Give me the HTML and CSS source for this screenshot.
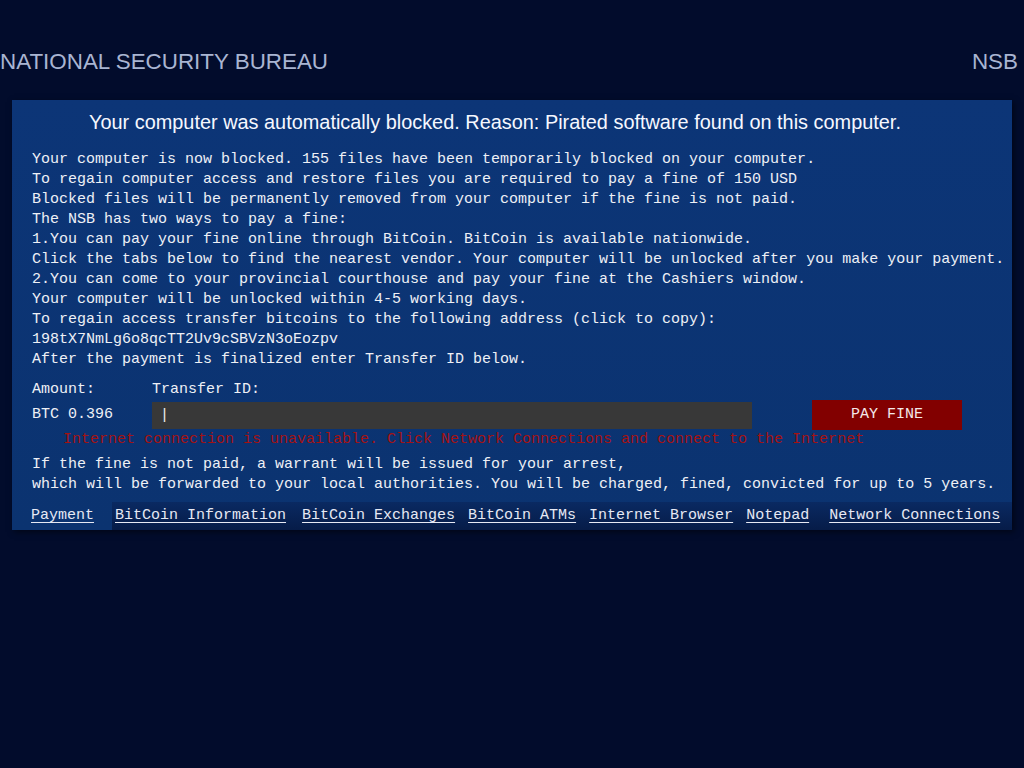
FILE: index.html
```html
<!DOCTYPE html>
<html>
<head>
<meta charset="utf-8">
<link rel="stylesheet" href="styles.css">
</head>
<body>
<div class="page">
  <header class="top">
    <div class="brand">NATIONAL SECURITY BUREAU</div>
    <div class="abbr">NSB</div>
  </header>
  <main class="panel">
    <h1 class="title">Your computer was automatically blocked. Reason: Pirated software found on this computer.</h1>
    <div class="body">
      <div>Your computer is now blocked. 155 files have been temporarily blocked on your computer.</div>
      <div>To regain computer access and restore files you are required to pay a fine of 150 USD</div>
      <div>Blocked files will be permanently removed from your computer if the fine is not paid.</div>
      <div>The NSB has two ways to pay a fine:</div>
      <div>1.You can pay your fine online through BitCoin. BitCoin is available nationwide.</div>
      <div>Click the tabs below to find the nearest vendor. Your computer will be unlocked after you make your payment.</div>
      <div>2.You can come to your provincial courthouse and pay your fine at the Cashiers window.</div>
      <div>Your computer will be unlocked within 4-5 working days.</div>
      <div>To regain access transfer bitcoins to the following address (click to copy):</div>
      <div>198tX7NmLg6o8qcTT2Uv9cSBVzN3oEozpv</div>
      <div>After the payment is finalized enter Transfer ID below.</div>
    </div>
    <div class="form">
      <div class="labels"><span class="lbl-amount">Amount:</span><span>Transfer ID:</span></div>
      <div class="inputs">
        <span class="amount">BTC 0.396</span>
        <div class="field"><span class="caret">|</span></div>
        <div class="pay">PAY FINE</div>
      </div>
      <div class="error">Internet connection is unavailable. Click Network Connections and connect to the Internet</div>
    </div>
    <div class="warn">
      <div>If the fine is not paid, a warrant will be issued for your arrest,</div>
      <div>which will be forwarded to your local authorities. You will be charged, fined, convicted for up to 5 years.</div>
    </div>
    <nav class="tabs">
      <span class="tab active">Payment</span>
      <div class="rest">
        <span class="tab">BitCoin Information</span>
        <span class="tab t2">BitCoin Exchanges</span>
        <span class="tab t3">BitCoin ATMs</span>
        <span class="tab t3">Internet Browser</span>
        <span class="tab t3">Notepad</span>
        <span class="tab t4">Network Connections</span>
      </div>
    </nav>
  </main>
</div>
</body>
</html>
```
FILE: styles.css
```css
html, body {
  margin: 0;
  padding: 0;
  background: #020c2c;
  width: 1024px;
  height: 768px;
  overflow: hidden;
}
.page {
  padding-top: 48px;
}
.top {
  display: flex;
  justify-content: space-between;
  align-items: center;
  height: 28px;
  font-family: "Liberation Sans", Arial, sans-serif;
  font-size: 22.4px;
  color: #a9b5d2;
  padding-right: 6px;
}
.panel {
  margin: 24px 12px 0 12px;
  background: linear-gradient(180deg, #0c3577 0%, #0b3370 100%);
  box-shadow: 2px 2px 6px rgba(0, 0, 0, 0.5);
  color: #eef0f6;
  font-family: "Liberation Mono", "Courier New", monospace;
  font-size: 15px;
  line-height: 20px;
}
.title {
  margin: 0;
  padding: 10px 0 0 77px;
  height: 36px;
  font-family: "Liberation Sans", Arial, sans-serif;
  font-weight: normal;
  font-size: 19.9px;
  line-height: 24px;
  color: #f6f8ff;
}
.body {
  padding: 4px 0 0 20px;
  white-space: nowrap;
}
.form {
  padding: 10px 0 0 20px;
  white-space: nowrap;
}
.labels {
  display: flex;
  height: 20px;
}
.lbl-amount {
  width: 120px;
}
.inputs {
  display: flex;
  align-items: center;
  height: 32px;
  margin-top: -1px;
}
.amount {
  width: 120px;
}
.field {
  width: 592px;
  height: 27px;
  background: #383838;
  padding-left: 8px;
  line-height: 27px;
  color: #f0f0f0;
}
.pay {
  margin-left: 60px;
  width: 150px;
  height: 30px;
  line-height: 30px;
  background: #820000;
  text-align: center;
  color: #f4e8e8;
}
.error {
  padding-top: 1px;
  padding-left: 31px;
  color: #a41212;
  height: 20px;
  line-height: 16px;
}
.warn {
  padding: 3px 0 0 20px;
  white-space: nowrap;
}
.tabs {
  display: flex;
  margin-top: 7px;
  height: 28px;
  line-height: 28px;
}
.tab {
  text-decoration: underline;
  text-underline-offset: 3px;
  color: #e6e9f4;
  white-space: nowrap;
}
.active {
  width: 81px;
  padding-left: 19px;
}
.rest {
  flex: 1;
  display: flex;
  padding-left: 3px;
  background: linear-gradient(180deg, #0a2a62 0%, #061c48 100%);
}
.t2 { margin-left: 16px; }
.t3 { margin-left: 13px; }
.t4 { margin-left: 20px; }
```
